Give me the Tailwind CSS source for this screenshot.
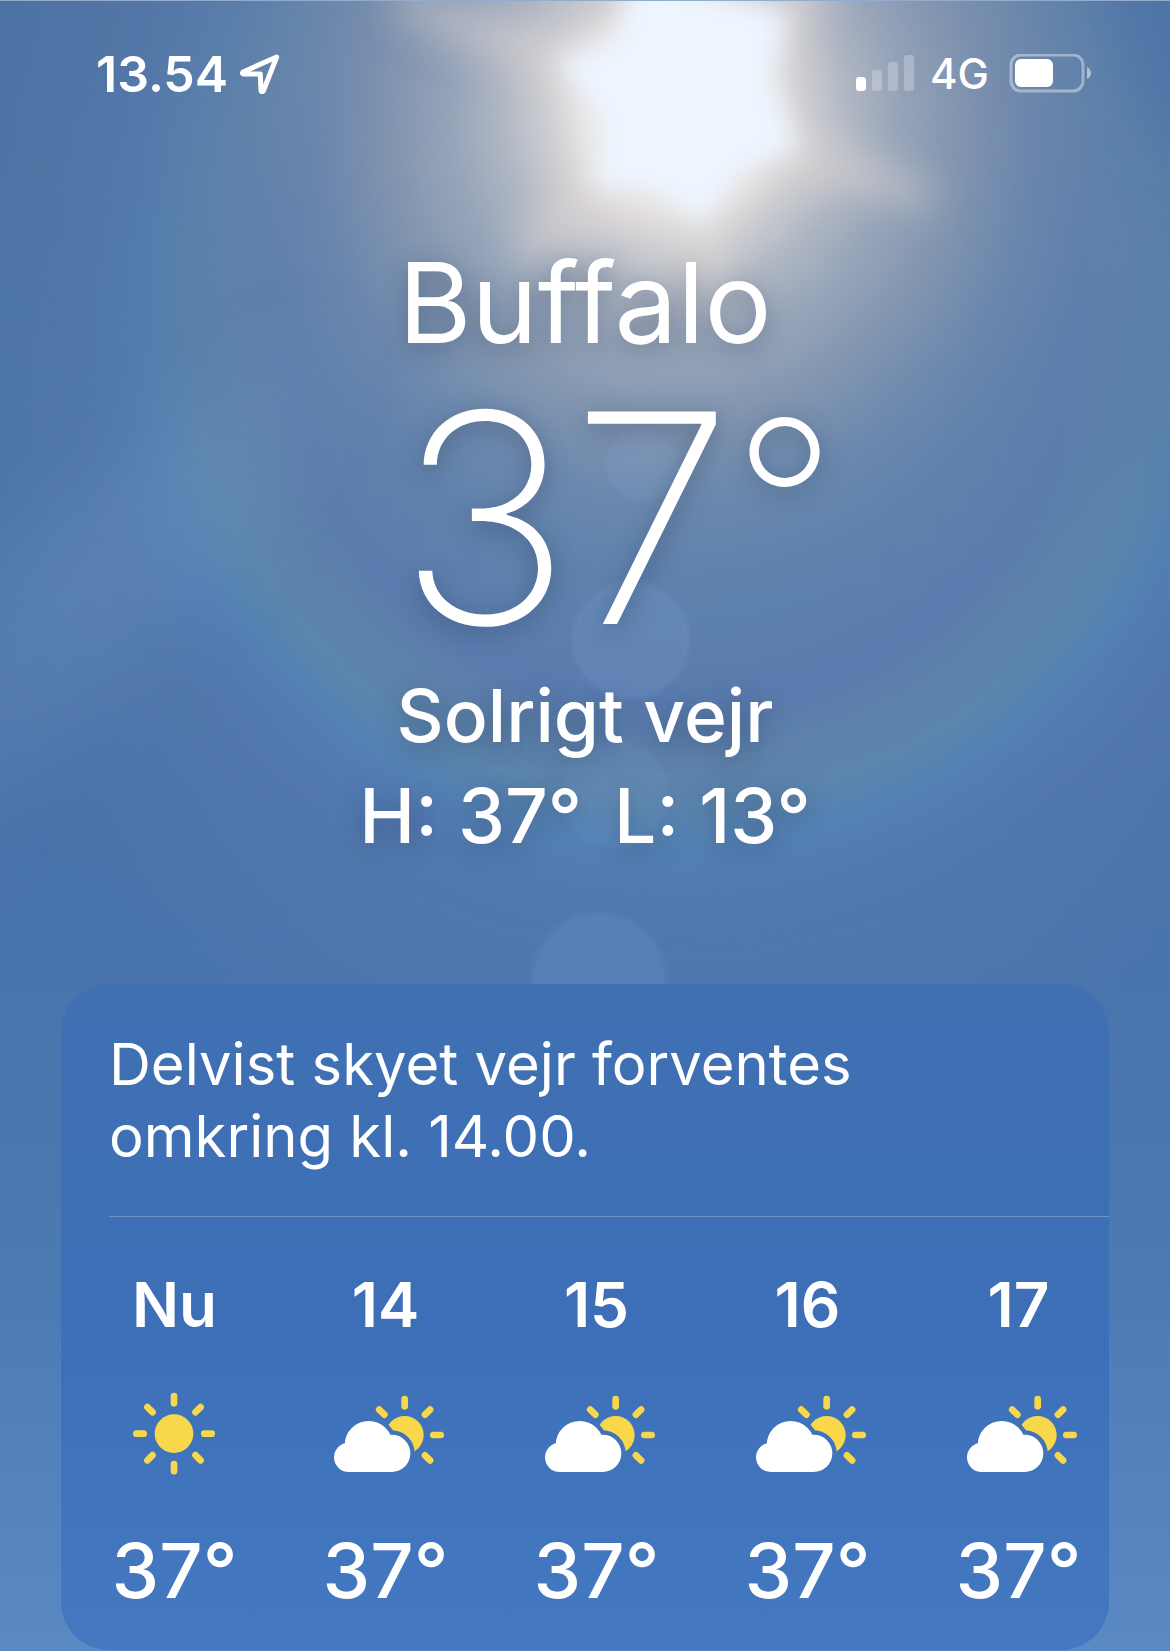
<!DOCTYPE html>
<html lang="da">
<head>
    <meta charset="UTF-8">
    <meta name="viewport" content="width=device-width, initial-scale=1.0">
    <title>Vejr – Buffalo</title>
    <script src="https://cdn.jsdelivr.net/npm/@tailwindcss/browser@4"></script>
</head>
<body class="bg-[#4c76ae] font-[Inter,sans-serif] text-white">

    <!-- Shared icons -->
    <svg class="absolute h-0 w-0" aria-hidden="true">
        <defs>
            <line id="ray" x1="0" y1="-113" x2="0" y2="-91" stroke="#f8d84a" stroke-width="20" stroke-linecap="round" />
            <g id="cloud-shape">
                <circle cx="128" cy="183" r="72" />
                <circle cx="197" cy="208" r="56" />
                <circle cx="68" cy="220" r="44" />
                <rect x="68" y="190" width="129" height="74" />
            </g>
            <mask id="cloud-gap" maskUnits="userSpaceOnUse" x="0" y="0" width="360" height="300">
                <rect width="360" height="300" fill="white" />
                <use href="#cloud-shape" fill="black" stroke="black" stroke-width="26" />
            </mask>
            <symbol id="icon-sun" viewBox="0 0 360 300">
                <g transform="translate(177 149)">
                    <circle r="58" fill="#f8d84a" />
                    <use href="#ray" />
                    <use href="#ray" transform="rotate(45)" />
                    <use href="#ray" transform="rotate(90)" />
                    <use href="#ray" transform="rotate(135)" />
                    <use href="#ray" transform="rotate(180)" />
                    <use href="#ray" transform="rotate(225)" />
                    <use href="#ray" transform="rotate(270)" />
                    <use href="#ray" transform="rotate(315)" />
                </g>
            </symbol>
            <symbol id="icon-cloud-sun" viewBox="0 0 360 300">
                <g mask="url(#cloud-gap)">
                    <circle cx="236" cy="153" r="57" fill="#f8d84a" />
                </g>
                <g transform="translate(236 153)">
                    <use href="#ray" transform="rotate(-45) translate(0 5)" />
                    <use href="#ray" transform="translate(0 5)" />
                    <use href="#ray" transform="rotate(45) translate(0 5)" />
                    <use href="#ray" transform="rotate(90) translate(0 5)" />
                    <use href="#ray" transform="rotate(135) translate(0 5)" />
                </g>
                <use href="#cloud-shape" fill="white" />
            </symbol>
        </defs>
    </svg>

    <div class="relative isolate min-h-screen overflow-hidden border-t border-white/40">

        <!-- Sky with sun glare, halo and lens flare -->
        <svg class="absolute inset-0 -z-10 h-full w-full" viewBox="0 0 1170 1651" preserveAspectRatio="xMidYMin slice" aria-hidden="true">
            <defs>
                <linearGradient id="sky" x1="0" y1="0" x2="0" y2="1">
                    <stop offset="0" stop-color="#3e659c" />
                    <stop offset="0.3" stop-color="#446ea4" />
                    <stop offset="0.45" stop-color="#4870a8" />
                    <stop offset="0.6" stop-color="#4974ac" />
                    <stop offset="0.78" stop-color="#4c7ab3" />
                    <stop offset="1" stop-color="#5b89c4" />
                </linearGradient>
                <radialGradient id="glow" gradientUnits="userSpaceOnUse" cx="675" cy="110" r="1000" gradientTransform="translate(675 110) scale(0.94 1) translate(-675 -110)">
                    <stop offset="0" stop-color="#f4f1ee" />
                    <stop offset="0.1" stop-color="#eae6e3" stop-opacity="0.98" />
                    <stop offset="0.14" stop-color="#dad7d6" stop-opacity="0.9" />
                    <stop offset="0.19" stop-color="#c8c8cb" stop-opacity="0.8" />
                    <stop offset="0.24" stop-color="#b2b7c1" stop-opacity="0.76" />
                    <stop offset="0.3" stop-color="#9ca7b6" stop-opacity="0.74" />
                    <stop offset="0.38" stop-color="#8398b4" stop-opacity="0.66" />
                    <stop offset="0.46" stop-color="#7592b4" stop-opacity="0.56" />
                    <stop offset="0.58" stop-color="#7595b8" stop-opacity="0.36" />
                    <stop offset="0.75" stop-color="#7898ba" stop-opacity="0.22" />
                    <stop offset="1" stop-color="#7c9cbc" stop-opacity="0" />
                </radialGradient>
                <radialGradient id="halo" gradientUnits="userSpaceOnUse" cx="680" cy="310" r="640">
                    <stop offset="0.45" stop-color="#7084b4" stop-opacity="0" />
                    <stop offset="0.62" stop-color="#6478b2" stop-opacity="0.24" />
                    <stop offset="0.7" stop-color="#7092a8" stop-opacity="0.3" />
                    <stop offset="0.77" stop-color="#6594ac" stop-opacity="0.42" />
                    <stop offset="0.83" stop-color="#568fc0" stop-opacity="0.36" />
                    <stop offset="0.89" stop-color="#5580c4" stop-opacity="0.26" />
                    <stop offset="1" stop-color="#5577b4" stop-opacity="0" />
                </radialGradient>
                <linearGradient id="halo-fade" x1="0" y1="0" x2="0" y2="1">
                    <stop offset="0" stop-color="#444" />
                    <stop offset="0.35" stop-color="#999" />
                    <stop offset="0.6" stop-color="#fff" />
                </linearGradient>
                <mask id="halo-mask"><rect width="1170" height="1000" fill="url(#halo-fade)" /></mask>
                <filter id="blur-sun" x="-50%" y="-50%" width="200%" height="200%"><feGaussianBlur stdDeviation="13" /></filter>
                <filter id="blur-ray" x="-50%" y="-50%" width="200%" height="200%"><feGaussianBlur stdDeviation="18" /></filter>
                <filter id="blur-band" x="-50%" y="-50%" width="200%" height="200%"><feGaussianBlur stdDeviation="40" /></filter>
                <filter id="blur-edge" x="-10%" y="-10%" width="120%" height="120%"><feGaussianBlur stdDeviation="2" /></filter>
            </defs>
            <rect width="1170" height="1651" fill="url(#sky)" />
            <rect width="1170" height="1651" fill="url(#glow)" />
            <rect width="1170" height="1000" fill="url(#halo)" mask="url(#halo-mask)" />
            <g filter="url(#blur-band)">
                <polygon points="330,330 -60,580 -60,860 260,520" fill="#7f9fc6" fill-opacity="0.2" />
                <polygon points="1100,-60 1240,-60 1240,200 1150,120" fill="#42689e" fill-opacity="0.4" />
            </g>
            <g filter="url(#blur-ray)" fill="#e0d8d4">
                <polygon points="640,50 400,-10 390,10 620,120" fill-opacity="0.45" />
                <polygon points="740,90 940,190 930,205 730,175" fill-opacity="0.5" />
                <polygon points="600,150 510,240 530,260 660,200" fill-opacity="0.5" />
                <polygon points="660,180 690,310 715,310 735,180" fill-opacity="0.6" />
                <polygon points="740,60 790,-40 840,-30 770,100" fill-opacity="0.5" />
            </g>
            <g fill="#edf5ff" filter="url(#blur-sun)">
                <polygon points="630,-30 700,-10 790,10 772,80 800,148 738,175 704,226 655,192 590,186 602,125 555,58 618,38" />
                <ellipse cx="684" cy="92" rx="82" ry="88" />
            </g>
            <g fill="#8fb0e0" fill-opacity="0.14" filter="url(#blur-edge)">
                <circle cx="642" cy="464" r="36" fill-opacity="0.1" />
                <circle cx="631" cy="639" r="57" stroke="#a9bfe0" stroke-opacity="0.1" stroke-width="3" />
                <circle cx="615" cy="793" r="54" fill-opacity="0.08" />
                <circle cx="599" cy="979" r="67" fill="#7598d8" fill-opacity="0.22" />
            </g>
        </svg>

        <!-- Status bar -->
        <div class="flex h-[145px] items-center justify-between pr-[78px] pl-24">
            <div class="flex items-center gap-3">
                <time class="text-[50px] leading-none font-semibold">13.54</time>
                <svg class="h-10 w-10" viewBox="0 0 120 120" fill="none" stroke="white" stroke-width="15" stroke-linejoin="round" role="img" aria-label="Lokalitet">
                    <path d="M110 9 L9 54 Q5 59 10 60 L61 60 L63 111 Q66 116 70 111 Z" />
                </svg>
            </div>
            <div class="flex items-center">
                <svg class="h-[38px] w-[58px]" viewBox="0 0 58 38" fill="white" role="img" aria-label="Signal, 1 af 4">
                    <rect x="0" y="22" width="10" height="14" rx="3" />
                    <rect x="16" y="15" width="10" height="21" rx="3" fill-opacity="0.25" />
                    <rect x="32" y="7" width="10" height="29" rx="3" fill-opacity="0.25" />
                    <rect x="48" y="0" width="10" height="36" rx="3" fill-opacity="0.25" />
                </svg>
                <span class="ml-4 text-[42px] leading-none font-medium">4G</span>
                <svg class="ml-5 h-10 w-[83px]" viewBox="0 0 83 40" role="img" aria-label="Batteri">
                    <rect x="2" y="1" width="72" height="36" rx="10" fill="none" stroke="white" stroke-opacity="0.4" stroke-width="3" />
                    <rect x="6" y="5" width="38" height="28" rx="6" fill="white" />
                    <path d="M78 13 Q82 15 82 19 Q82 23 78 25 Z" fill="white" fill-opacity="0.5" />
                </svg>
            </div>
        </div>

        <header class="pt-[86px] text-center [text-shadow:0_6px_24px_rgb(40_60_90/0.45)]">
            <h1 class="text-[112px] leading-[140px] font-normal">Buffalo</h1>
            <p class="mt-4 flex items-start justify-center pl-16"><span class="text-[292px] leading-[260px] font-extralight">37</span><span class="text-[228px] leading-none font-[240]">°</span></p>
            <p class="mt-[18px] text-[73px] leading-[100px] font-medium">Solrigt vejr</p>
            <p class="flex justify-center gap-8 text-[75px] leading-[100px] font-medium"><span>H: 37°</span><span>L: 13°</span></p>
        </header>

        <main class="px-[61px] pt-[118px]">
            <section class="overflow-hidden rounded-[48px] bg-linear-to-b from-[#4070b2] via-[#3c6fb7] to-[#4479c1]">
                <p class="px-12 py-11 text-[58px] leading-[72px]">Delvist skyet vejr forventes<br>omkring kl. 14.00.</p>
                <div class="ml-12 border-t border-white/25"></div>
                <ol class="flex overflow-hidden pt-[52px] pb-[30px] pl-2 text-center">
                    <li class="w-[211px] shrink-0">
                        <h2 class="text-[62px] leading-[72px] font-semibold">Nu</h2>
                        <svg class="mx-auto mt-[43px] h-[100px] w-[120px]" role="img" aria-label="Sol"><use href="#icon-sun" /></svg>
                        <p class="mt-9 text-[76px] leading-[100px] font-medium">37°</p>
                    </li>
                    <li class="w-[211px] shrink-0">
                        <h2 class="text-[62px] leading-[72px] font-semibold">14</h2>
                        <svg class="mx-auto mt-[43px] h-[100px] w-[120px]" role="img" aria-label="Delvist skyet"><use href="#icon-cloud-sun" /></svg>
                        <p class="mt-9 text-[76px] leading-[100px] font-medium">37°</p>
                    </li>
                    <li class="w-[211px] shrink-0">
                        <h2 class="text-[62px] leading-[72px] font-semibold">15</h2>
                        <svg class="mx-auto mt-[43px] h-[100px] w-[120px]" role="img" aria-label="Delvist skyet"><use href="#icon-cloud-sun" /></svg>
                        <p class="mt-9 text-[76px] leading-[100px] font-medium">37°</p>
                    </li>
                    <li class="w-[211px] shrink-0">
                        <h2 class="text-[62px] leading-[72px] font-semibold">16</h2>
                        <svg class="mx-auto mt-[43px] h-[100px] w-[120px]" role="img" aria-label="Delvist skyet"><use href="#icon-cloud-sun" /></svg>
                        <p class="mt-9 text-[76px] leading-[100px] font-medium">37°</p>
                    </li>
                    <li class="w-[211px] shrink-0">
                        <h2 class="text-[62px] leading-[72px] font-semibold">17</h2>
                        <svg class="mx-auto mt-[43px] h-[100px] w-[120px]" role="img" aria-label="Delvist skyet"><use href="#icon-cloud-sun" /></svg>
                        <p class="mt-9 text-[76px] leading-[100px] font-medium">37°</p>
                    </li>
                </ol>
            </section>
        </main>
    </div>
</body>
</html>
